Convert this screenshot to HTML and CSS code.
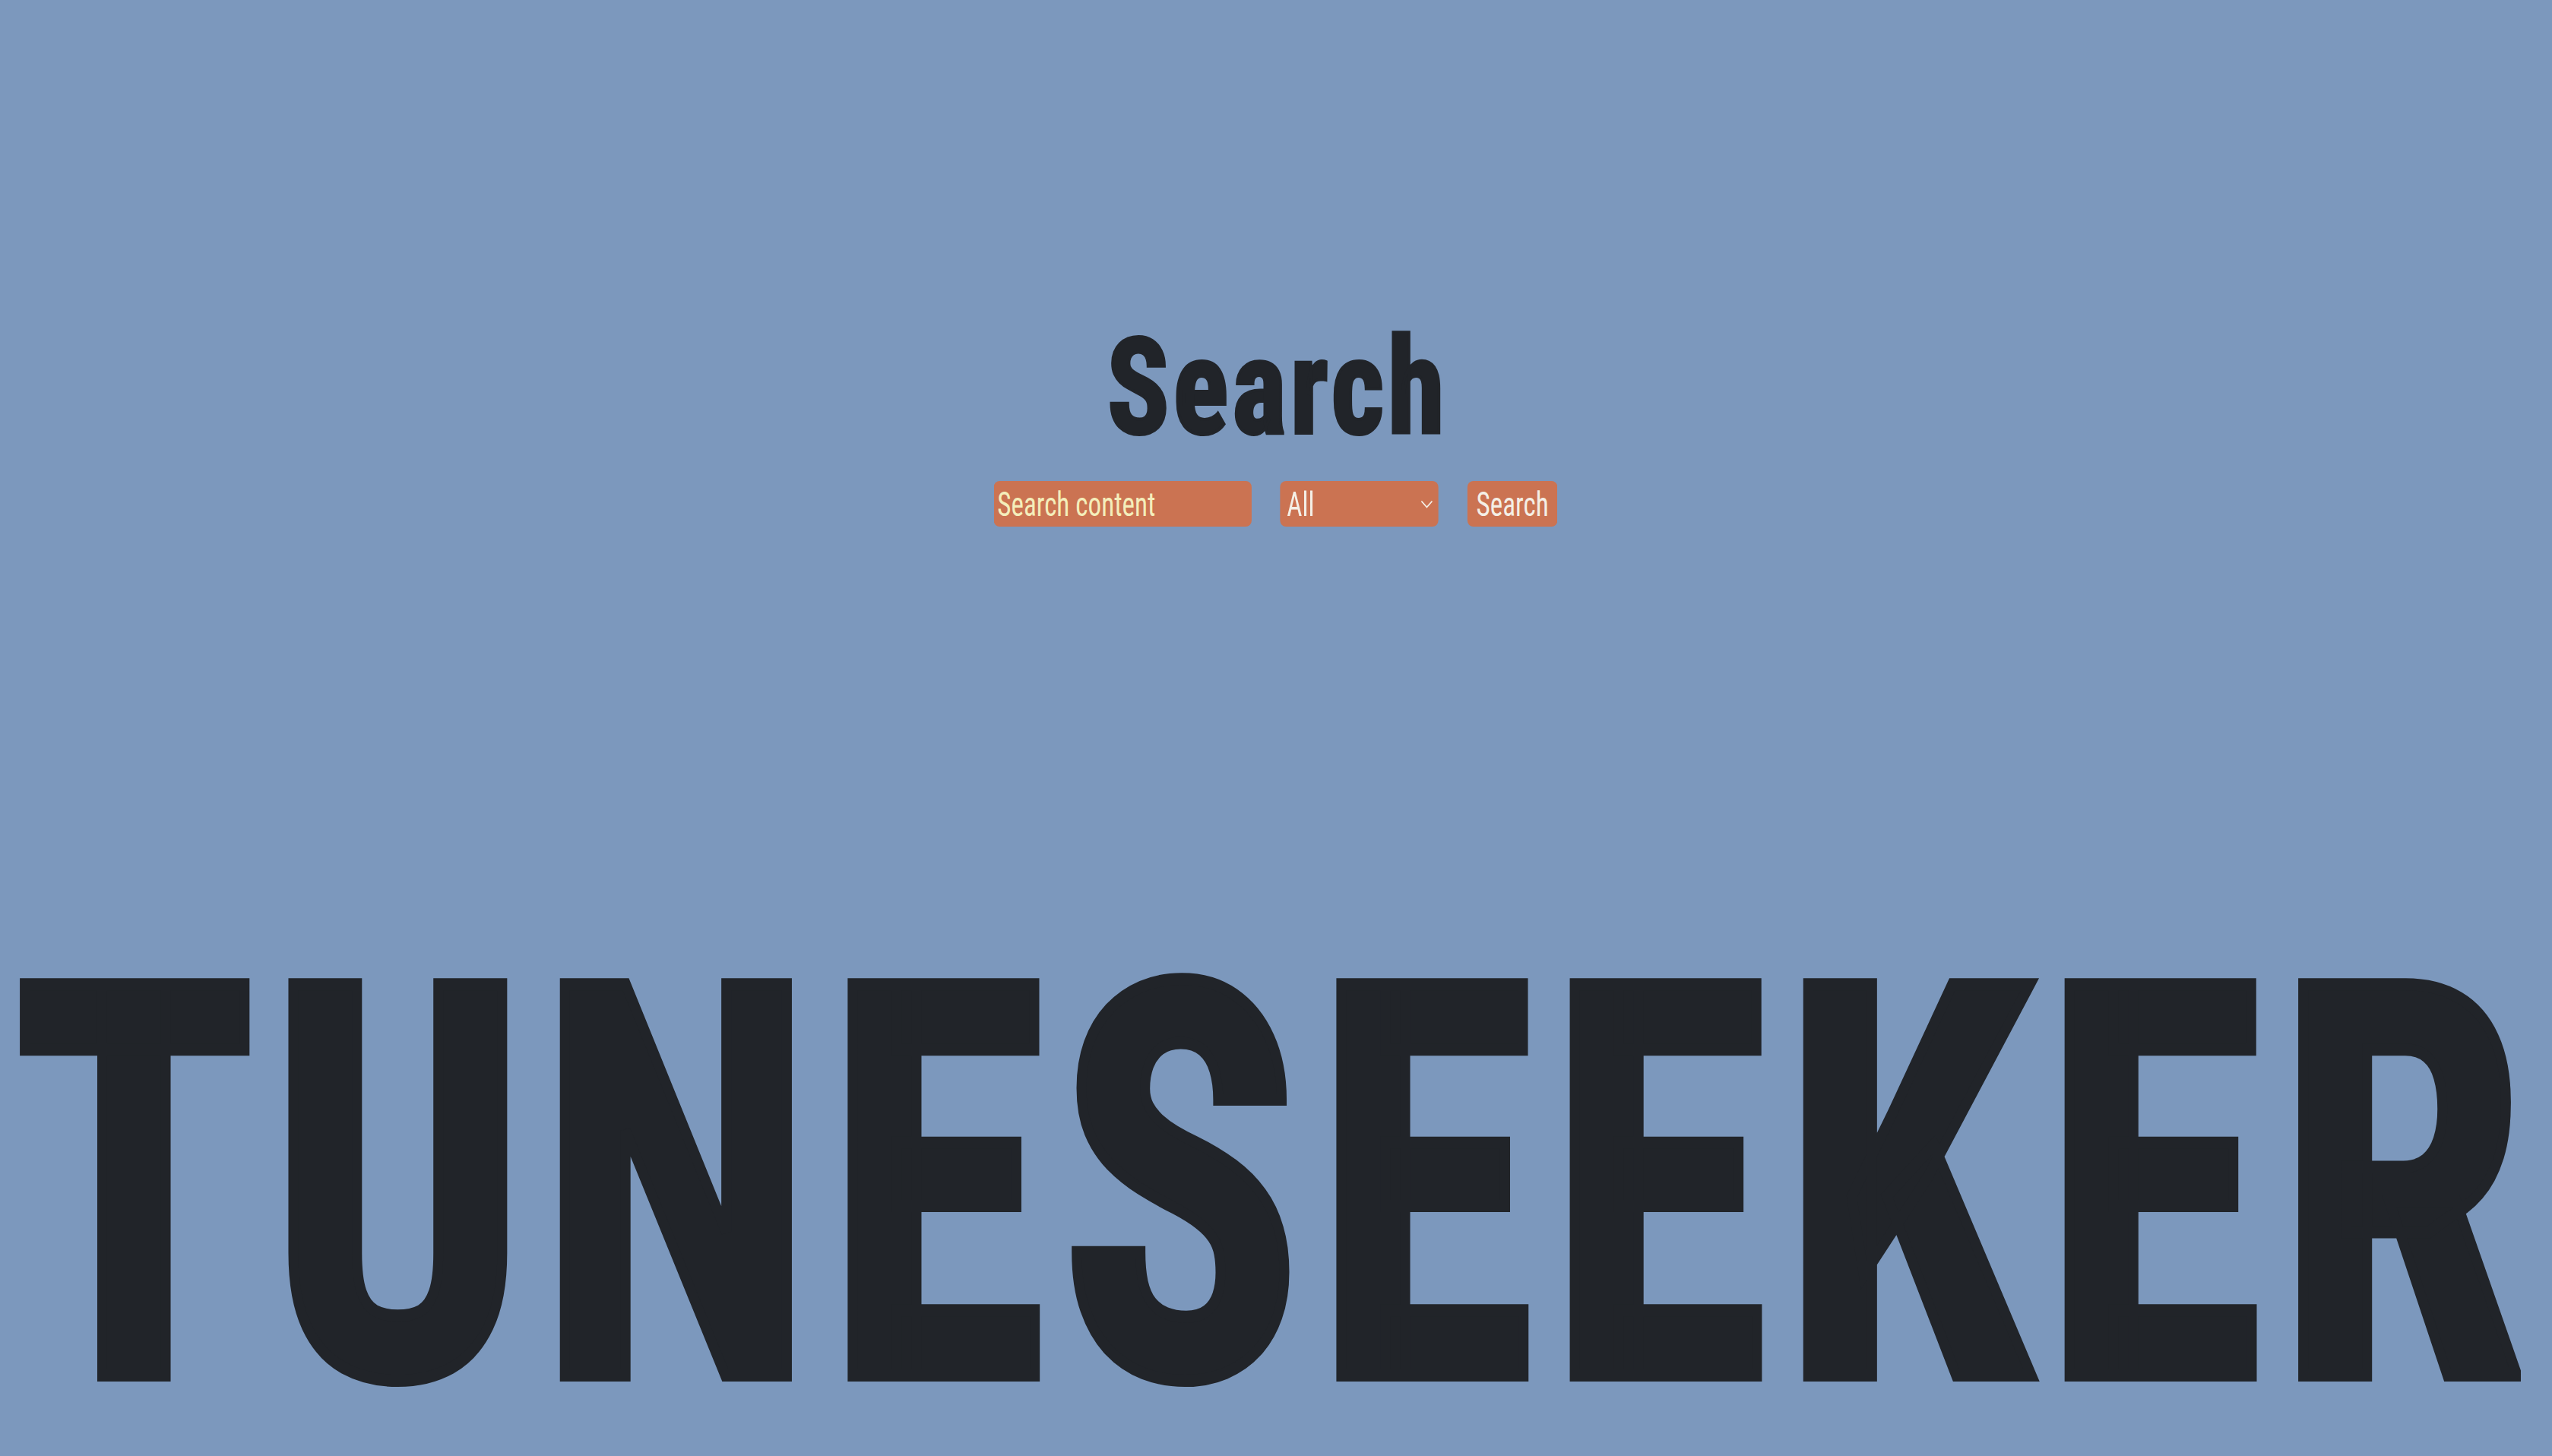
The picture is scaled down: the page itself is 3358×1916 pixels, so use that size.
FILE: index.html
```html
<!DOCTYPE html>
<html lang="en">
<head>
<meta charset="utf-8">
<title>TuneSeeker</title>
<link rel="stylesheet" href="styles.css">
</head>
<body>
<main class="page">
  <section class="search">
    <h1 class="search-title">Search</h1>
    <form class="search-form">
      <input class="search-input" type="text" placeholder="Search content">
      <div class="select-wrap">
        <select class="search-select">
          <option>All</option>
          <option>Artist</option>
          <option>Album</option>
          <option>Track</option>
        </select>
        <svg class="chevron" viewBox="0 0 21 11" aria-hidden="true"><path d="M1.5 1.5 L10.5 9.5 L19.5 1.5" fill="none" stroke="#f4efe6" stroke-width="1.8"/></svg>
      </div>
      <button class="search-button" type="button">Search</button>
    </form>
  </section>
  <footer class="brand"><span class="brand-text">TUNESEEKER</span></footer>
</main>
</body>
</html>
```
FILE: styles.css
```css
html, body {
  margin: 0;
  height: 100%;
}
body {
  background: #7c98bd;
  color: #212429;
  font-family: "Roboto Condensed", "Roboto", sans-serif;
  overflow: hidden;
}
.page {
  height: 100vh;
  display: flex;
  flex-direction: column;
}
.search {
  padding-top: 410px;
  display: flex;
  flex-direction: column;
  align-items: center;
}
.search-title {
  margin: 0;
  padding-left: 5.5px;
  font-size: 177px;
  line-height: 200px;
  font-weight: 700;
  letter-spacing: 5.5px;
  -webkit-text-stroke: 4px #212429;
  transform: scaleX(0.86);
}
.search-form {
  margin-top: 23px;
  display: flex;
  gap: 48.7px;
  transform: scaleX(0.78);
}
.search-input,
.search-select,
.search-button {
  box-sizing: border-box;
  height: 60px;
  border: 0;
  border-radius: 10px / 8px;
  background: #cb7352;
  font-family: "Roboto Condensed", "Roboto", sans-serif;
  font-weight: 400;
  font-size: 45px;
  margin: 0;
  outline: none;
}
.search-input {
  width: 434.6px;
  padding: 0 0 0 6px;
  color: #f4eebb;
}
.search-input::placeholder {
  color: #f4eebb;
  opacity: 1;
}
.select-wrap {
  position: relative;
}
.search-select {
  -webkit-appearance: none;
  appearance: none;
  width: 266.7px;
  padding: 0 0 0 11px;
  color: #f4efe6;
}
.chevron {
  position: absolute;
  right: 9px;
  top: 25px;
  width: 21px;
  height: 11px;
  pointer-events: none;
}
.search-button {
  width: 152.6px;
  padding: 0;
  color: #f4efe6;
  text-align: center;
}
.brand {
  margin-top: auto;
  height: 707px;
  display: flex;
  justify-content: center;
}
.brand-text {
  font-size: 724px;
  line-height: 707px;
  font-weight: 700;
  letter-spacing: 23px;
  white-space: nowrap;
  -webkit-text-stroke: 16px #212429;
  transform: scaleX(0.812);
}
```
